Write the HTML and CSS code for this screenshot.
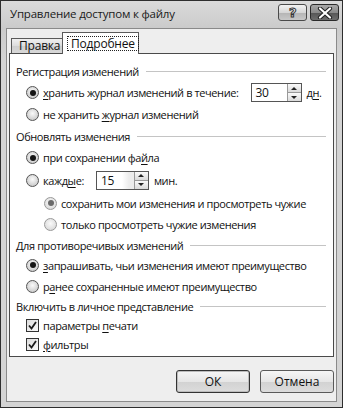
FILE: index.html
```html
<!DOCTYPE html>
<html lang="ru">
<head>
    <meta charset="UTF-8">
    <title>Управление доступом к файлу</title>
    <link rel="stylesheet" href="styles.css">
</head>
<body>

    <div class="window">
        <!-- Title bar -->
        <div class="titlebar">
            <span class="title">Управление доступом к файлу</span>
            <div class="caption-buttons">
                <div class="cap-btn help"><span>?</span></div>
                <div class="cap-btn close">
                    <svg width="16" height="12" viewBox="0 0 16 12">
                        <path d="M3 1.5 L13 10.5 M13 1.5 L3 10.5" stroke="#222" stroke-width="4.2" stroke-linecap="round"/>
                        <path d="M3 1.5 L13 10.5 M13 1.5 L3 10.5" stroke="#fff" stroke-width="2.2" stroke-linecap="round"/>
                    </svg>
                </div>
            </div>
        </div>

        <div class="client">
            <!-- Tabs -->
            <div class="tabs">
                <div class="tab">Правка</div>
                <div class="tab active"><span class="focus">Подробнее</span></div>
            </div>

            <div class="panel">
                <div class="group-title h21">Регистрация изменений</div>
                <div class="row h21">
                    <span class="radio checked"></span>
                    <span><u>х</u>ранить журнал изменений в течение:</span>
                    <span class="spin spin-days">
                        <span class="spin-value">30</span>
                        <span class="spin-arrows"><span class="arrow up"></span><span class="arrow down"></span></span>
                    </span>
                    <span class="unit">д<u>н</u>.</span>
                </div>
                <div class="row h22">
                    <span class="radio"></span>
                    <span>не хранить <u>ж</u>урнал изменений</span>
                </div>

                <div class="group-title h22">Обновлять изменения</div>
                <div class="row h21">
                    <span class="radio checked"></span>
                    <span>при сохранении фа<u>й</u>ла</span>
                </div>
                <div class="row h24">
                    <span class="radio"></span>
                    <span>кажд<u>ы</u>е:</span>
                    <span class="spin spin-min disabled">
                        <span class="spin-value">15</span>
                        <span class="spin-arrows"><span class="arrow up"></span><span class="arrow down"></span></span>
                    </span>
                    <span class="unit">мин.</span>
                </div>
                <div class="row sub h22">
                    <span class="radio dim checked"></span>
                    <span>сохранить мои изменения и просмотреть чужие</span>
                </div>
                <div class="row sub h21">
                    <span class="radio dim"></span>
                    <span>только просмотреть чужие изменения</span>
                </div>

                <div class="group-title h20">Для противоречивых изменений</div>
                <div class="row h20">
                    <span class="radio checked"></span>
                    <span><u>з</u>апрашивать, чьи изменения имеют преимущество</span>
                </div>
                <div class="row h22">
                    <span class="radio"></span>
                    <span>р<u>а</u>нее сохраненные имеют преимущество</span>
                </div>

                <div class="group-title h19">Включить в личное представление</div>
                <div class="row h19">
                    <span class="checkbox">
                        <svg width="9" height="9" viewBox="0 0 9 9"><path d="M1 4.5 L3.5 7.5 L8 1" fill="none" stroke="#1a1a1a" stroke-width="1.8"/></svg>
                    </span>
                    <span>параметры <u>п</u>ечати</span>
                </div>
                <div class="row h19">
                    <span class="checkbox">
                        <svg width="9" height="9" viewBox="0 0 9 9"><path d="M1 4.5 L3.5 7.5 L8 1" fill="none" stroke="#1a1a1a" stroke-width="1.8"/></svg>
                    </span>
                    <span><u>ф</u>ильтры</span>
                </div>
            </div>

            <div class="footer">
                <button class="btn default">ОК</button>
                <button class="btn">Отмена</button>
            </div>
        </div>
    </div>

</body>
</html>
```

FILE: styles.css
```css
/* Reset */
* {
    margin: 0;
    padding: 0;
    box-sizing: border-box;
}

body {
    font-family: 'Open Sans', 'Noto Sans', sans-serif;
    font-size: 11px;
    letter-spacing: -0.4px;
    color: #111;
    background: #fff;
    white-space: nowrap;
}

u {
    text-decoration: underline;
    text-underline-offset: 2px;
}

/* Window frame */
.window {
    width: 343px;
    height: 408px;
    border: 1px solid #2e2e2e;
    background: linear-gradient(#dadada, #cbcbcb 27px, #d4d4d4 60px, #d4d4d4);
    padding: 0 5px 5px;
    display: flex;
    flex-direction: column;
}

.titlebar {
    height: 27px;
    display: flex;
    justify-content: space-between;
    align-items: flex-start;
}

.title {
    font-size: 11.5px;
    letter-spacing: -0.2px;
    margin: 5px 0 0 4px;
    color: #1a1a1a;
}

.caption-buttons {
    display: flex;
    gap: 3px;
    margin-top: 3px;
    margin-right: -2px;
}

.cap-btn {
    width: 29px;
    height: 17px;
    border: 1px solid #4a4a4a;
    border-radius: 3px;
    display: flex;
    align-items: center;
    justify-content: center;
}

.cap-btn.help {
    background: linear-gradient(#f2f2f2, #d6d6d6 50%, #b4b4b4 51%, #c8c8c8);
}

.cap-btn.help span {
    font-family: 'DejaVu Sans', sans-serif;
    font-weight: bold;
    font-size: 13px;
    color: #eee;
    -webkit-text-stroke: 1px #333;
    line-height: 1;
}

.cap-btn.close {
    background: linear-gradient(#a8a8a8, #8a8a8a 50%, #555 51%, #6e6e6e);
    border-color: #2a2a2a;
}

/* Client area */
.client {
    flex: 1;
    border: 1px solid #8a8a8a;
    background: #eeeeee;
    padding: 3px 2px 0 2px;
    display: flex;
    flex-direction: column;
}

/* Tabs */
.tabs {
    display: flex;
    align-items: flex-end;
    padding-left: 2px;
    height: 21px;
    position: relative;
    z-index: 1;
}

.tab {
    height: 15px;
    width: 52px;
    border: 1px solid #5a5a5a;
    border-bottom: none;
    background: linear-gradient(#f0f0f0, #dcdcdc 50%, #cfcfcf 51%, #d8d8d8);
    padding-left: 7px;
    line-height: 14px;
    font-size: 12px;
    letter-spacing: -0.2px;
}

.tab.active {
    height: 22px;
    width: 77px;
    margin-left: -1px;
    margin-bottom: -1px;
    background: #fff;
    padding: 3px 0 0 4px;
    line-height: 14px;
}

.focus {
    display: inline-block;
    border: 1px dotted #222;
    padding: 0 3px;
    height: 15px;
}

/* Panel */
.panel {
    background: #fff;
    border: 1px solid #4a4a4a;
    padding: 7px 7px 2px 6px;
}

.group-title {
    display: flex;
    align-items: center;
}

.group-title::after {
    content: "";
    flex: 1;
    height: 1px;
    background: #c4c4c4;
    margin-left: 7px;
}

.row {
    display: flex;
    align-items: center;
    padding-left: 10px;
}

.row.sub {
    padding-left: 28px;
}

.h19 { height: 19px; }
.h20 { height: 20px; }
.h21 { height: 21px; }
.h22 { height: 22px; }
.h24 { height: 24px; }

/* Radio buttons */
.radio {
    width: 13px;
    height: 13px;
    border-radius: 50%;
    border: 1px solid #555;
    background: radial-gradient(circle at 50% 40%, #fafafa, #d0d0d0 70%, #bdbdbd);
    margin-right: 4px;
    position: relative;
    flex-shrink: 0;
}

.radio.checked::after {
    content: "";
    position: absolute;
    left: 2.5px;
    top: 2.5px;
    width: 6px;
    height: 6px;
    border-radius: 50%;
    background: #151515;
}

.radio.dim {
    border-color: #999;
    background: radial-gradient(circle at 50% 40%, #fafafa, #dedede 70%, #cfcfcf);
}

.radio.dim.checked::after {
    background: #6a6a6a;
}

/* Checkbox */
.checkbox {
    width: 13px;
    height: 13px;
    border: 1px solid #333;
    background: linear-gradient(135deg, #dcdcdc, #fafafa);
    margin-right: 4px;
    display: flex;
    align-items: center;
    justify-content: center;
}

/* Spin boxes */
.spin {
    display: flex;
    height: 19px;
    border: 1px solid #555;
    background: #fff;
}

.spin-days {
    width: 51px;
    margin-left: 12px;
}

.spin-min {
    width: 53px;
    margin-left: 12px;
}

.spin.disabled {
    background: linear-gradient(90deg, #fff 25px, #ececec 32px);
}

.spin-value {
    flex: 1;
    padding-left: 4px;
    line-height: 17px;
    font-size: 12px;
}

.spin-arrows {
    width: 14px;
    display: flex;
    flex-direction: column;
    border-left: 1px solid #999;
}

.arrow {
    flex: 1;
    background: linear-gradient(#fafafa, #dadada);
    border-bottom: 1px solid #999;
    display: flex;
    align-items: center;
    justify-content: center;
}

.arrow:last-child {
    border-bottom: none;
}

.arrow::after {
    content: "";
    border-left: 3px solid transparent;
    border-right: 3px solid transparent;
}

.arrow.up::after {
    border-bottom: 3px solid #222;
}

.arrow.down::after {
    border-top: 3px solid #222;
}

.unit {
    margin-left: 5px;
}

/* Footer buttons */
.footer {
    display: flex;
    justify-content: flex-end;
    gap: 10px;
    padding: 13px 0 0;
}

.btn {
    width: 74px;
    height: 23px;
    font-family: inherit;
    font-size: 12px;
    color: #111;
    border: 1px solid #5a5a5a;
    border-radius: 3px;
    background: linear-gradient(#f6f6f6, #e6e6e6 50%, #d2d2d2 51%, #dcdcdc);
}

.btn.default {
    border-color: #333;
    box-shadow: inset 0 0 0 1px #bcbcbc;
}
```
